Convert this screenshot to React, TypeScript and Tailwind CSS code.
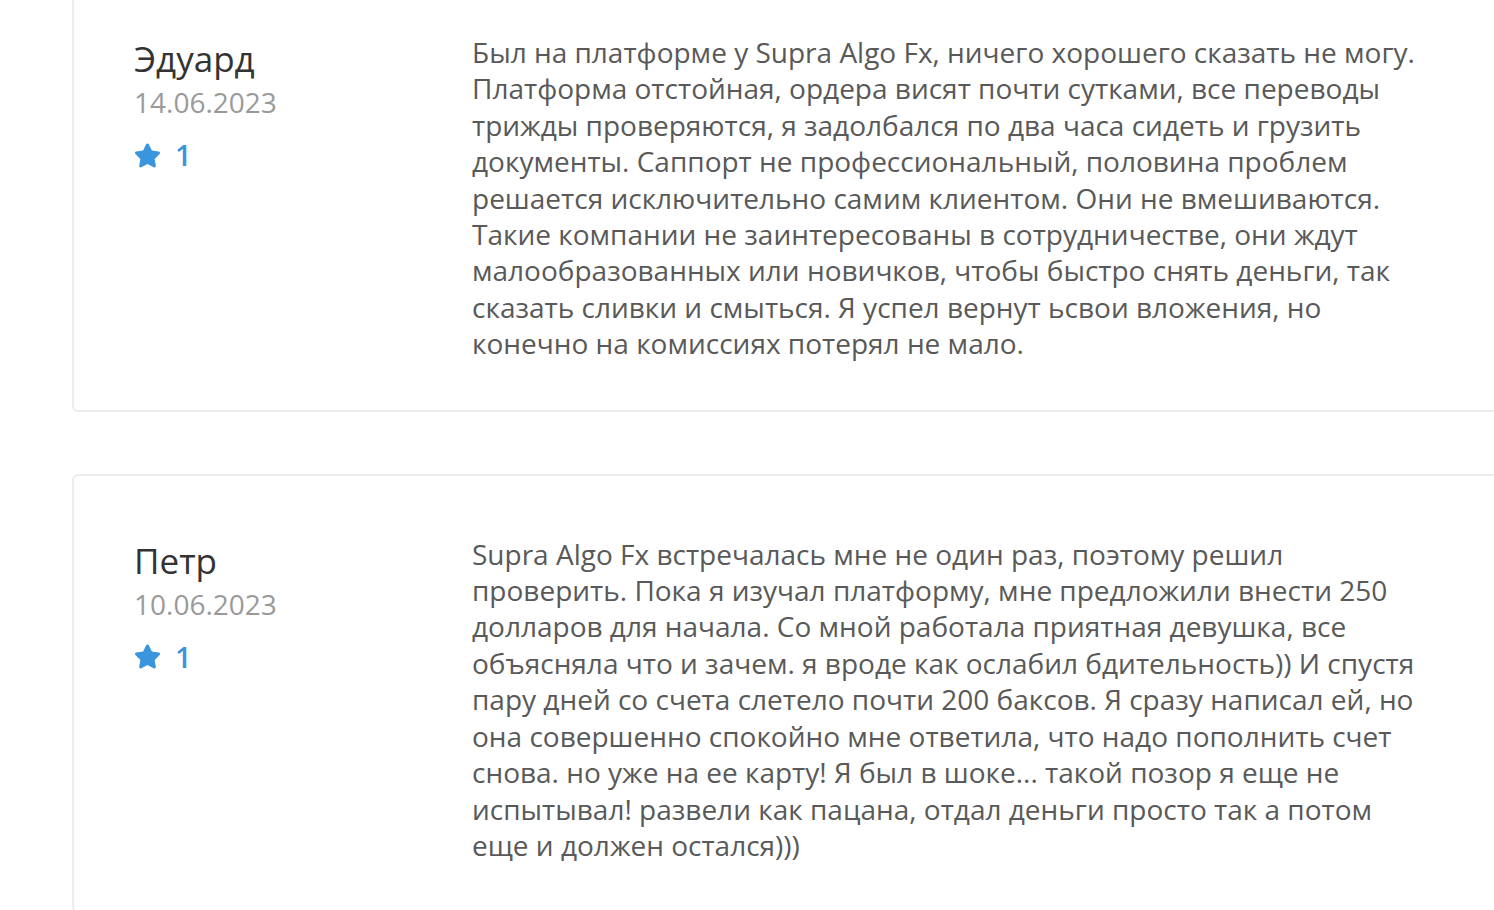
import React from 'react';
import { FaStar } from 'react-icons/fa';

type Review = {
  name: string;
  date: string;
  rating: number;
  text: string;
};

const REVIEWS: Review[] = [
  {
    name: 'Эдуард',
    date: '14.06.2023',
    rating: 1,
    text:
      'Был на платформе у Supra Algo Fx, ничего хорошего сказать не могу. Платформа отстойная, ордера висят почти сутками, все переводы трижды проверяются, я задолбался по два часа сидеть и грузить документы. Саппорт не профессиональный, половина проблем решается исключительно самим клиентом. Они не вмешиваются. Такие компании не заинтересованы в сотрудничестве, они ждут малообразованных или новичков, чтобы быстро снять деньги, так сказать сливки и смыться. Я успел вернут ьсвои вложения, но конечно на комиссиях потерял не мало.',
  },
  {
    name: 'Петр',
    date: '10.06.2023',
    rating: 1,
    text:
      'Supra Algo Fx встречалась мне не один раз, поэтому решил проверить. Пока я изучал платформу, мне предложили внести 250 долларов для начала. Со мной работала приятная девушка, все объясняла что и зачем. я вроде как ослабил бдительность)) И спустя пару дней со счета слетело почти 200 баксов. Я сразу написал ей, но она совершенно спокойно мне ответила, что надо пополнить счет снова. но уже на ее карту! Я был в шоке... такой позор я еще не испытывал! развели как пацана, отдал деньги просто так а потом еще и должен остался)))',
  },
];

const ReviewCard = ({ review }: { review: Review }) => (
  <div className="flex w-[1480px] rounded-md border-2 border-[#ececec] bg-white pl-[60px] pt-[60px] pb-[48px]">
    <div className="w-[338px] shrink-0 pt-[4px]">
      <div className="text-[35px] leading-[42px] text-[#333333]">{review.name}</div>
      <div className="mt-[4px] text-[28px] leading-[36px] text-[#9a9a9a]">{review.date}</div>
      <div className="mt-[17px] flex items-center gap-[14px] text-[29px] font-semibold leading-[36px] text-[#3a95dc]">
        <FaStar size={27} />
        <span>{review.rating}</span>
      </div>
    </div>
    <p className="w-[955px] text-[28px] leading-[36.4px] text-[#595959]">{review.text}</p>
  </div>
);

export default function App() {
  return (
    <div className="h-[910px] overflow-hidden bg-white font-['Open_Sans',sans-serif]">
      <div className="ml-[72px] mt-[-28px] flex flex-col gap-[62px]">
        {REVIEWS.map((r) => (
          <ReviewCard key={r.name} review={r} />
        ))}
      </div>
    </div>
  );
}
